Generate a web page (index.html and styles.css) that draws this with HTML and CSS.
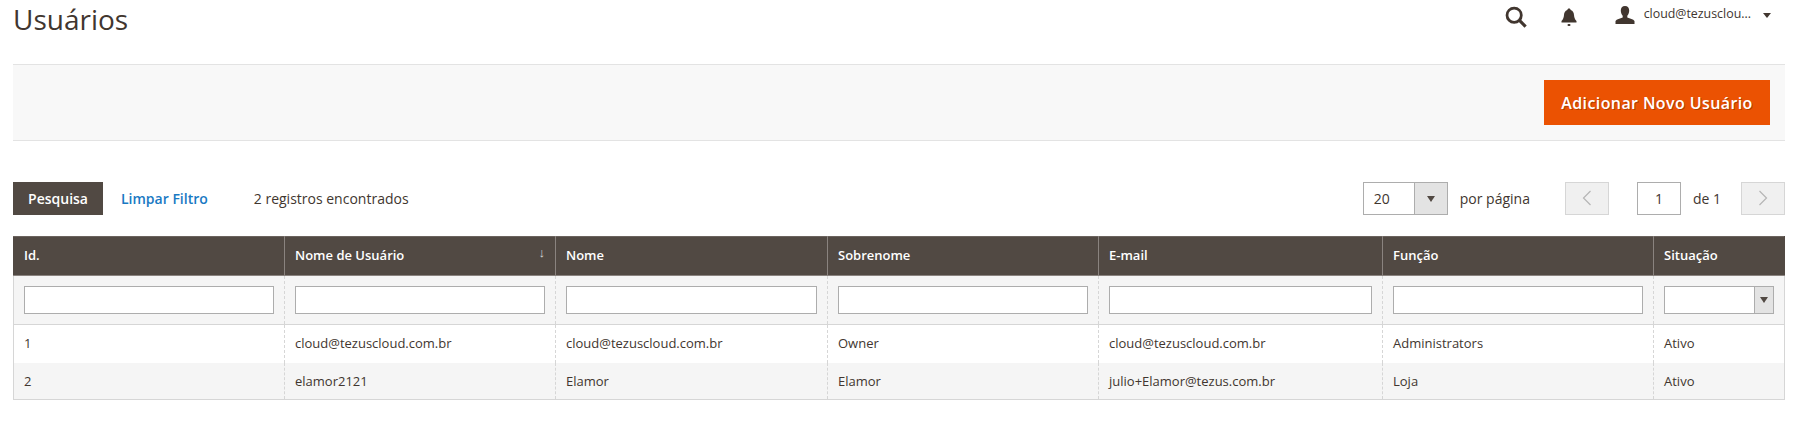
FILE: index.html
```html
<!DOCTYPE html>
<html lang="pt-BR">
<head>
    <meta charset="UTF-8">
    <title>Usuários</title>
    <link rel="stylesheet" href="styles.css">
</head>
<body>
    <header class="page-header">
        <h1>Usuários</h1>
        <div class="header-actions">
            <svg class="icon-search" width="22" height="22" viewBox="0 0 24 24"><circle cx="10" cy="10" r="7.8" fill="none" stroke="#41362f" stroke-width="3"/><path d="M15.5 15.5L22.5 22.5" stroke="#41362f" stroke-width="3.4" fill="none"/></svg>
            <svg class="icon-bell" width="16" height="18" viewBox="0 0 16 18"><path d="M8 0.5c1 0 1.600.6 1.700 1.500 2.300.7 3.100 2.700 3.300 5 .2 2.600.8 4.300 2.500 6v1.500H.5V13c1.700-1.700 2.300-3.400 2.500-6 .2-2.300 1-4.300 3.300-5C6.400 1.100 7 .5 8 .5z" fill="#41362f"/><rect x="6.500" y="16" width="3" height="2" rx="1" fill="#41362f"/></svg>
            <div class="user-menu">
                <svg class="icon-user" width="20" height="18" viewBox="0 0 20 18"><path d="M10 0c2.800 0 4.200 1.800 4.200 4.500 0 2.200-.8 4-1.900 5.200v1.900c2.500 1 6.200 1.700 7.200 3.400V18H.5v-3c1-1.700 4.700-2.400 7.200-3.400V9.700C6.600 8.500 5.800 6.700 5.800 4.500 5.800 1.800 7.200 0 10 0z" fill="#41362f"/></svg>
                <span class="user-name">cloud@tezusclou...</span>
                <span class="caret-small"></span>
            </div>
        </div>
    </header>

    <div class="actions-band">
        <button class="btn-primary">Adicionar Novo Usuário</button>
    </div>

    <div class="grid-toolbar">
        <button class="btn-search">Pesquisa</button>
        <a class="reset-link" href="#">Limpar Filtro</a>
        <span class="records">2 registros encontrados</span>
        <div class="pager">
            <div class="per-page">
                <span class="per-page-value">20</span>
                <span class="select-arrow"><span class="caret"></span></span>
            </div>
            <span class="per-page-label">por página</span>
            <button class="page-btn page-prev"><svg width="10" height="16" viewBox="0 0 10 16"><path d="M8.500 1L1.500 8l7 7" fill="none" stroke="#b5b5b5" stroke-width="1.200"/></svg></button>
            <input class="page-input" type="text" value="1">
            <span class="page-total">de 1</span>
            <button class="page-btn page-next"><svg width="10" height="16" viewBox="0 0 10 16"><path d="M1.500 1L8.500 8l-7 7" fill="none" stroke="#b5b5b5" stroke-width="1.200"/></svg></button>
        </div>
    </div>

    <table class="data-grid">
        <colgroup>
            <col class="col-std"><col class="col-std"><col class="col-wide"><col class="col-std">
            <col class="col-email"><col class="col-std"><col>
        </colgroup>
        <thead>
            <tr>
                <th>Id.</th>
                <th class="sorted">Nome de Usuário<span class="sort-arrow">↓</span></th>
                <th>Nome</th>
                <th>Sobrenome</th>
                <th>E-mail</th>
                <th>Função</th>
                <th>Situação</th>
            </tr>
            <tr class="filters">
                <td><input type="text"></td>
                <td><input type="text"></td>
                <td><input type="text"></td>
                <td><input type="text"></td>
                <td><input type="text"></td>
                <td><input type="text"></td>
                <td>
                    <div class="filter-select">
                        <span class="filter-select-value"></span>
                        <span class="select-arrow"><span class="caret"></span></span>
                    </div>
                </td>
            </tr>
        </thead>
        <tbody>
            <tr class="odd">
                <td>1</td>
                <td>cloud@tezuscloud.com.br</td>
                <td>cloud@tezuscloud.com.br</td>
                <td>Owner</td>
                <td>cloud@tezuscloud.com.br</td>
                <td>Administrators</td>
                <td>Ativo</td>
            </tr>
            <tr class="even">
                <td>2</td>
                <td>elamor2121</td>
                <td>Elamor</td>
                <td>Elamor</td>
                <td>julio+Elamor@tezus.com.br</td>
                <td>Loja</td>
                <td>Ativo</td>
            </tr>
        </tbody>
    </table>
</body>
</html>
```

FILE: styles.css
```css
* {
    box-sizing: border-box;
}
body {
    font-family: "Open Sans", sans-serif;
    font-size: 14px;
    color: #41362f;
    background-color: #fff;
    margin: 0;
    padding: 0 20px 0 13px;
}
.page-header {
    display: flex;
    justify-content: space-between;
    height: 64px;
}
h1 {
    font-size: 28px;
    font-weight: 400;
    line-height: 38px;
    margin: 0;
}
.header-actions {
    display: flex;
    align-items: flex-start;
    padding-top: 5px;
    padding-right: 14px;
}
.icon-search {
    margin-right: 34px;
    margin-top: 1px;
}
.icon-bell {
    margin-right: 38px;
    margin-top: 3px;
}
.user-menu {
    display: flex;
    align-items: center;
    height: 20px;
    font-size: 12.4px;
}
.icon-user {
    margin-right: 9px;
}
.user-name {
    margin-right: 12px;
    padding-bottom: 3px;
}
.caret-small {
    border-top: 5px solid #41362f;
    border-left: 4px solid transparent;
    border-right: 4px solid transparent;
}
.actions-band {
    display: flex;
    justify-content: flex-end;
    align-items: flex-start;
    height: 77px;
    padding: 15px 15px 0 0;
    background-color: #f8f8f8;
    border-top: 1px solid #e3e3e3;
    border-bottom: 1px solid #e3e3e3;
}
.btn-primary {
    width: 226px;
    height: 45px;
    font-family: inherit;
    font-size: 16px;
    font-weight: 600;
    letter-spacing: 0.4px;
    color: #fff;
    background-color: #eb5202;
    border: none;
    text-shadow: 1px 1px 0 rgba(0, 0, 0, 0.25);
}
.grid-toolbar {
    display: flex;
    align-items: center;
    height: 33px;
    margin-top: 41px;
}
.btn-search {
    width: 90px;
    height: 33px;
    font-family: inherit;
    font-size: 14px;
    font-weight: 600;
    color: #fff;
    background-color: #514943;
    border: none;
}
.reset-link {
    margin-left: 18px;
    font-weight: 600;
    color: #1979c3;
    text-decoration: none;
}
.records {
    margin-left: 46px;
}
.pager {
    display: flex;
    align-items: center;
    margin-left: auto;
}
.per-page {
    display: flex;
    width: 85px;
    height: 33px;
    background-color: #fff;
    border: 1px solid #adadad;
}
.per-page-value {
    flex: 1;
    padding-left: 10px;
    line-height: 31px;
}
.select-arrow {
    display: flex;
    align-items: center;
    justify-content: center;
    width: 33px;
    background-color: #e3e3e3;
    border-left: 1px solid #adadad;
}
.caret {
    border-top: 6px solid #514943;
    border-left: 4px solid transparent;
    border-right: 4px solid transparent;
}
.per-page-label {
    margin-left: 12px;
    margin-right: 35px;
}
.page-btn {
    display: flex;
    align-items: center;
    justify-content: center;
    width: 44px;
    height: 33px;
    padding: 0 0 2px;
    background-color: #f0f0f0;
    border: 1px solid #d6d6d6;
}
.page-input {
    width: 44px;
    height: 33px;
    margin-left: 28px;
    font-family: inherit;
    font-size: 14px;
    color: #41362f;
    text-align: center;
    border: 1px solid #adadad;
    padding: 0;
}
.page-total {
    margin-left: 12px;
    margin-right: 20px;
}
.data-grid {
    width: 1772px;
    margin-top: 21px;
    table-layout: fixed;
    border-collapse: collapse;
    font-size: 13px;
}
.col-std {
    width: 271px;
}
.col-wide {
    width: 272px;
}
.col-email {
    width: 284px;
}
th {
    height: 39px;
    padding: 0 10px 2px;
    font-size: 13px;
    font-weight: 600;
    text-align: left;
    color: #fff;
    background-color: #514943;
    border: 1px solid #8a837f;
    border-top-color: #6b635e;
    border-bottom-color: #8a837f;
}
th:first-child {
    border-left-color: #514943;
}
th:last-child {
    border-right-color: #514943;
}
.sorted {
    position: relative;
}
.sort-arrow {
    position: absolute;
    top: 6px;
    right: 10px;
    font-size: 13px;
    font-weight: 400;
    color: #d6d6d6;
}
td {
    height: 38px;
    padding: 0 10px;
    border-left: 1px dashed #d6d6d6;
    border-right: 1px dashed #d6d6d6;
}
td:first-child {
    border-left: 1px solid #d6d6d6;
}
td:last-child {
    border-right: 1px solid #d6d6d6;
}
.filters td {
    height: 49px;
    background-color: #f5f5f5;
    border-bottom: 1px solid #d6d6d6;
}
.filters input {
    display: block;
    width: 100%;
    height: 28px;
    background-color: #fff;
    border: 1px solid #adadad;
    padding: 0;
}
.filter-select {
    display: flex;
    height: 28px;
    background-color: #fff;
    border: 1px solid #adadad;
}
.filter-select-value {
    flex: 1;
}
.filter-select .select-arrow {
    width: 19px;
}
.odd td {
    padding-bottom: 2px;
}
.even td {
    height: 37px;
    background-color: #f5f5f5;
    border-bottom: 1px solid #d6d6d6;
}
```
